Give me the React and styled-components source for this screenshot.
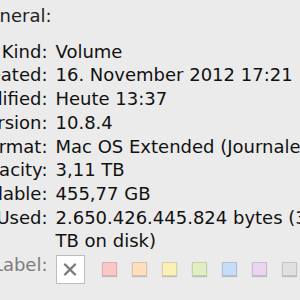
import React from "react";
import styled, { createGlobalStyle } from "styled-components";

const Global = createGlobalStyle`
  html, body { margin: 0; padding: 0; background: #ebebeb; }
  body { width: 300px; height: 300px; overflow: hidden; }
`;

const Window = styled.div`
  width: 300px;
  height: 300px;
  overflow: hidden;
  background: #ebebeb;
  font-family: "DejaVu Sans", "Liberation Sans", sans-serif;
  font-size: 18px;
  line-height: 23.7px;
  color: #111;
`;

const Panel = styled.div`
  margin-left: -72.5px;
  padding-top: 4px;
  white-space: nowrap;
`;

const SectionTitle = styled.div`
  padding-left: 47px;
  margin-bottom: 12px;
  color: #222;
`;

const InfoGrid = styled.div`
  display: grid;
  grid-template-columns: 120px auto;
  column-gap: 8px;
  align-items: start;
`;

const Key = styled.div`
  text-align: right;
  color: ${(p) => (p.$muted ? "#7d7d7d" : "#111")};
`;

const Value = styled.div`
  color: #111;
`;

const Swatches = styled.div`
  display: flex;
  align-items: center;
  gap: 15px;
  margin-top: 1.5px;
`;

const NoneBox = styled.div`
  width: 27px;
  height: 27px;
  border: 1px solid #bdbdbd;
  background: #fff;
  display: flex;
  align-items: center;
  justify-content: center;
  margin-right: 2px;
`;

const Swatch = styled.div`
  width: 15px;
  height: 14px;
  box-sizing: border-box;
  background: ${(p) => p.$color};
  border: 1px solid rgba(0, 0, 0, 0.12);
  box-shadow: 0 1px 1px rgba(0, 0, 0, 0.2);
`;

const rows = [
  ["Kind:", "Volume"],
  ["Created:", "16. November 2012 17:21"],
  ["Modified:", "Heute 13:37"],
  ["Version:", "10.8.4"],
  ["Format:", "Mac OS Extended (Journaled)"],
  ["Capacity:", "3,11 TB"],
  ["Available:", "455,77 GB"],
];

const colors = ["#fbc6c6", "#fddfbe", "#fbf0b5", "#e1eec2", "#c6dcf7", "#e9d5f0", "#e0e0e0"];

export default function App() {
  return (
    <>
      <Global />
      <Window>
        <Panel>
          <SectionTitle>General:</SectionTitle>
          <InfoGrid>
            {rows.map(([k, v]) => (
              <React.Fragment key={k}>
                <Key>{k}</Key>
                <Value>{v}</Value>
              </React.Fragment>
            ))}
            <Key>Used:</Key>
            <Value>
              2.650.426.445.824 bytes (3,11
              <br />
              TB on disk)
            </Value>
            <Key $muted>Label:</Key>
            <Swatches>
              <NoneBox>
                <svg width="14" height="13" viewBox="0 0 14 13">
                  <path d="M2 1.5 L12 11.5 M12 1.5 L2 11.5" stroke="#7a7a7a" strokeWidth="2.4" strokeLinecap="round" fill="none" />
                </svg>
              </NoneBox>
              {colors.map((c) => (
                <Swatch key={c} $color={c} />
              ))}
            </Swatches>
          </InfoGrid>
        </Panel>
      </Window>
    </>
  );
}
